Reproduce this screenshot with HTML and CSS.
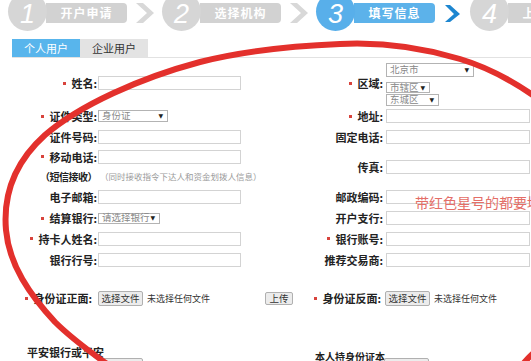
FILE: index.html
```html
<!DOCTYPE html>
<html lang="zh-CN">

<head>
    <meta charset="UTF-8">
    <meta name="viewport" content="width=device-width, initial-scale=1.0">
    <title>填写信息</title>
    <link rel="stylesheet" href="styles.css">
</head>

<body>
    <div class="steps">
        <div class="step">
            <span class="circle">1</span>
            <span class="pill">开户申请</span>
        </div>
        <svg class="chev" viewBox="0 0 18 20"><polygon points="0,0 7,0 18,10 7,20 0,20 11,10" /></svg>
        <div class="step">
            <span class="circle">2</span>
            <span class="pill">选择机构</span>
        </div>
        <svg class="chev" viewBox="0 0 18 20"><polygon points="0,0 7,0 18,10 7,20 0,20 11,10" /></svg>
        <div class="step on">
            <span class="circle">3</span>
            <span class="pill">填写信息</span>
        </div>
        <svg class="chev on" viewBox="0 0 18 20"><polygon points="1,2 6,2 16,11 6,19 1,19 10,11" /></svg>
        <div class="step">
            <span class="circle">4</span>
            <span class="pill">上传资料</span>
        </div>
    </div>

    <div class="tabs">
        <span class="tab active">个人用户</span>
        <span class="tab">企业用户</span>
    </div>

    <div class="form">
        <label class="lbl"><i class="star"></i>姓名:</label>
        <div class="fld"><input class="ipt" type="text"></div>
        <label class="lbl r"><i class="star"></i>区域:</label>
        <div class="fld region">
            <span class="sel city">北京市<b>▼</b></span>
            <span class="sel dist">市辖区<b>▼</b></span>
            <span class="sel area">东城区<b>▼</b></span>
        </div>

        <label class="lbl"><i class="star"></i>证件类型:</label>
        <div class="fld"><span class="sel idt">身份证<b>▼</b></span></div>
        <label class="lbl r"><i class="star"></i>地址:</label>
        <div class="fld"><input class="ipt wide" type="text"></div>

        <label class="lbl">证件号码:</label>
        <div class="fld"><input class="ipt" type="text"></div>
        <label class="lbl r">固定电话:</label>
        <div class="fld"><input class="ipt wide" type="text"></div>

        <label class="lbl"><i class="star"></i>移动电话:</label>
        <div class="fld"><input class="ipt" type="text"></div>
        <label class="lbl r fax">传真:</label>
        <div class="fld fax"><input class="ipt wide" type="text"></div>

        <label class="lbl sms">（短信接收）</label>
        <div class="fld"><span class="hint">（同时接收指令下达人和资金划拨人信息）</span></div>

        <label class="lbl">电子邮箱:</label>
        <div class="fld"><input class="ipt" type="text"></div>
        <label class="lbl r">邮政编码:</label>
        <div class="fld"><input class="ipt wide" type="text"></div>

        <label class="lbl"><i class="star"></i>结算银行:</label>
        <div class="fld"><span class="sel bank">请选择银行<b>▼</b></span></div>
        <label class="lbl r">开户支行:</label>
        <div class="fld"><input class="ipt wide" type="text"></div>

        <label class="lbl"><i class="star"></i>持卡人姓名:</label>
        <div class="fld"><input class="ipt" type="text"></div>
        <label class="lbl r"><i class="star"></i>银行账号:</label>
        <div class="fld"><input class="ipt wide" type="text"></div>

        <label class="lbl">银行行号:</label>
        <div class="fld"><input class="ipt" type="text"></div>
        <label class="lbl r">推荐交易商:</label>
        <div class="fld"><input class="ipt wide" type="text"></div>
    </div>

    <div class="upload">
        <label class="lbl up"><i class="star"></i>身份证正面:</label>
        <div class="fld">
            <button class="filebtn">选择文件</button>
            <span class="nofile">未选择任何文件</span>
            <button class="sendbtn">上传</button>
        </div>
        <label class="lbl r"><i class="star"></i>身份证反面:</label>
        <div class="fld">
            <button class="filebtn right">选择文件</button>
            <span class="nofile">未选择任何文件</span>
        </div>
    </div>

    <div class="upload last">
        <label class="lbl top"><i class="star"></i>平安银行或平安</label>
        <div class="fld start"><button class="filebtn">选择文件</button></div>
        <label class="lbl top rt"><i class="star"></i>本人持身份证本</label>
        <div class="fld start"><button class="filebtn">选择文件</button></div>
    </div>

    <div class="remark">带红色星号的都要填</div>

    <svg class="ring" viewBox="0 0 531 361">
        <path d="M 545 104 C 520 85, 490 68, 460 59 C 420 47, 380 42, 340 44 C 290 46, 240 52, 200 62 C 140 78, 80 105, 45 135 C 15 162, 3 195, 6 230 C 9 265, 30 295, 55 322 C 75 342, 95 355, 118 372" />
        <path d="M 516 374 C 522 364, 530 355, 542 346" />
    </svg>
</body>

</html>
```

FILE: styles.css
```css
body {
    margin: 0;
    width: 531px;
    height: 361px;
    overflow: hidden;
    position: relative;
    background: #fff;
    color: #222;
    font-family: "Noto Sans CJK SC", "Liberation Sans", sans-serif;
}

/* step bar */
.steps {
    display: flex;
    align-items: flex-start;
    height: 30px;
    padding-left: 8px;
    white-space: nowrap;
}

.step {
    display: flex;
    align-items: flex-start;
    flex-shrink: 0;
}

.circle {
    position: relative;
    z-index: 1;
    box-sizing: border-box;
    width: 39px;
    height: 39px;
    margin-top: -8px;
    padding-top: 9px;
    border-radius: 50%;
    background: #d6d6d6;
    color: #fff;
    font: italic 27px/27px "Liberation Sans", sans-serif;
    text-align: center;
}

.pill {
    flex-shrink: 0;
    width: 81px;
    height: 20px;
    margin-top: 3px;
    margin-left: -1px;
    border-radius: 0 4px 4px 0;
    background: #d2d2d2;
    color: #fff;
    font-size: 12px;
    font-weight: bold;
    line-height: 20px;
    letter-spacing: 1px;
    text-align: center;
}

.step.on .circle {
    background: #58afea;
}

.step.on .pill {
    background: #5cb2ea;
}

.chev {
    flex-shrink: 0;
    width: 18px;
    height: 20px;
    margin: 3px 8px 0 9px;
    fill: #d8d8d8;
}

.chev.on {
    fill: #1d86d0;
}

/* tabs */
.tabs {
    display: flex;
    margin: 9px 0 0 12px;
    border-bottom: 1px solid #e2e2e2;
}

.tab {
    width: 68px;
    height: 18px;
    background: #e3e3e3;
    color: #333;
    font-size: 11px;
    line-height: 18px;
    text-align: center;
}

.tab.active {
    background: #58b5ec;
    color: #fff;
}

/* form grid */
.form {
    display: grid;
    grid-template-columns: 98px 152px 136px 160px;
    grid-template-rows: 46px 20px 21px 19px 20px 22px 20px 21px 21px;
    margin-top: 2px;
}

.lbl {
    display: flex;
    align-items: center;
    justify-content: flex-end;
    padding-right: 1px;
    font-size: 11px;
    font-weight: bold;
    white-space: nowrap;
}

.lbl.r {
    padding-right: 3px;
}

.lbl.fax,
.fld.fax {
    grid-row: span 2;
}

.lbl.sms {
    grid-column: 1;
    font-size: 10px;
    letter-spacing: -0.5px;
}

.star {
    width: 3px;
    height: 3px;
    margin-right: 5px;
    background: #d8433c;
}

.fld {
    display: flex;
    align-items: center;
    white-space: nowrap;
}

.ipt {
    box-sizing: border-box;
    width: 143px;
    height: 14px;
    margin: 0;
    padding: 0;
    border: 1px solid #d3d3d3;
    background: #fff;
}

.ipt.wide {
    width: 144px;
}

.hint {
    margin-left: 2px;
    color: #9a9a9a;
    font-size: 8.5px;
}

.sel {
    display: flex;
    align-items: center;
    justify-content: space-between;
    box-sizing: border-box;
    padding: 0 4px 0 3px;
    border: 1px solid #b3b3b3;
    background: #fff;
    color: #888;
    font-size: 9.5px;
    line-height: 1;
}

.sel b {
    color: #222;
    font-family: "DejaVu Sans", sans-serif;
    font-size: 6px;
}

.sel.city {
    width: 88px;
    height: 14px;
}

.sel.dist {
    width: 44px;
    height: 11px;
    margin-top: 5px;
}

.sel.area {
    width: 53px;
    height: 12px;
    margin-top: 1px;
}

.sel.idt {
    width: 70px;
    height: 12px;
}

.sel.bank {
    width: 62px;
    height: 11px;
}

.region {
    flex-direction: column;
    align-items: flex-start;
    padding-top: 3px;
}

/* upload rows */
.upload {
    display: grid;
    grid-template-columns: 98px 196px 90px 160px;
    height: 26px;
    margin-top: 15px;
}

.lbl.up {
    padding-right: 6px;
}

.filebtn {
    box-sizing: border-box;
    width: 45px;
    height: 15px;
    margin: 0;
    padding: 0;
    border: 1px solid #b0b0b0;
    border-radius: 2px;
    background: #ececec;
    color: #333;
    font-family: inherit;
    font-size: 9.5px;
    line-height: 13px;
}

.filebtn.right {
    margin-left: 1px;
}

.nofile {
    margin-left: 4px;
    color: #333;
    font-size: 9px;
}

.sendbtn {
    box-sizing: border-box;
    width: 28px;
    height: 13px;
    margin: 0 1px 0 auto;
    padding: 0;
    border: 1px solid #b0b0b0;
    border-radius: 2px;
    background: #ececec;
    color: #333;
    font-family: inherit;
    font-size: 9.5px;
    line-height: 11px;
}

.upload.last {
    height: 30px;
    margin-top: 34px;
}

.lbl.top {
    align-items: flex-start;
    justify-content: flex-start;
    padding-left: 22px;
    line-height: 14px;
}

.lbl.top .star {
    margin-top: 6px;
}

.lbl.rt {
    padding: 5px 0 0 16px;
    font-size: 10px;
}

.fld.start {
    align-items: flex-start;
    padding-top: 13px;
}

/* overlays */
.remark {
    position: absolute;
    left: 415px;
    top: 194px;
    color: #e46e67;
    font-size: 14px;
    line-height: 16px;
    white-space: nowrap;
}

.ring {
    position: absolute;
    left: 0;
    top: 0;
    width: 531px;
    height: 361px;
    pointer-events: none;
    fill: none;
    stroke: #e3302c;
    stroke-width: 6;
    stroke-linecap: round;
}
```
